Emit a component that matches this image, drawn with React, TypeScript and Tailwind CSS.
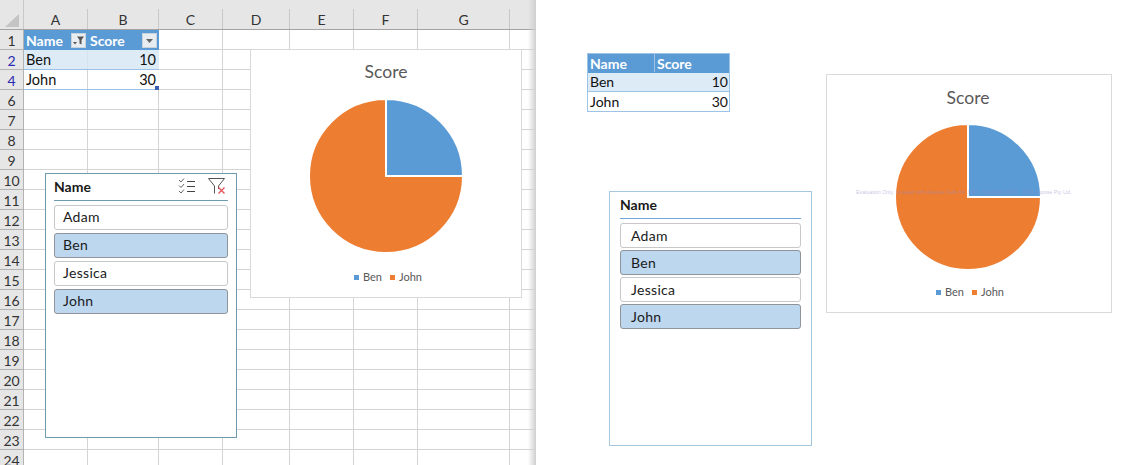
const columns = [
  { label: "A", width: "w-[64px]" },
  { label: "B", width: "w-[71px]" },
  { label: "C", width: "w-[64px]" },
  { label: "D", width: "w-[67px]" },
  { label: "E", width: "w-[64px]" },
  { label: "F", width: "w-[64px]" },
  { label: "G", width: "w-[92px]" },
];

const rowNumbers = [2, 4, 6, 7, 8, 9, 10, 11, 12, 13, 14, 15, 16, 17, 18, 19, 20, 21, 22, 23, 24];
const names = ["Adam", "Ben", "Jessica", "John"];
const selected = ["Ben", "John"];

function FilterButton({ funnel }: { funnel?: boolean }) {
  return (
    <div className="w-[15px] h-[15px] bg-[#e8edf2] border border-[#c9d3dc] flex items-center justify-center">
      <svg width="13" height="13" viewBox="0 0 13 13">
        {funnel ? (
          <>
            <path d="M5 2.500h7L9.500 6v4.500L7.500 9.500V6z" fill="#555" />
            <path d="M1 8h4L3 10.500z" fill="#555" />
          </>
        ) : (
          <path d="M3 5h7L6.500 9z" fill="#666" />
        )}
      </svg>
    </div>
  );
}

function Pie({ r, size }: { r: number; size: number }) {
  return (
    <svg width={size} height={size} viewBox={`${-size / 2} ${-size / 2} ${size} ${size}`}>
      <path d={`M0 0H${r}A${r} ${r} 0 1 1 0 ${-r}Z`} fill="#ed7d31" stroke="#fff" strokeWidth="2" />
      <path d={`M0 0V${-r}A${r} ${r} 0 0 1 ${r} 0Z`} fill="#5b9bd5" stroke="#fff" strokeWidth="2" />
    </svg>
  );
}

function Legend({ gap }: { gap: string }) {
  return (
    <div className={`flex items-center h-4 text-[11px] text-[#595959] ${gap}`}>
      <div className="flex items-center gap-[4px]">
        <div className="w-[5px] h-[5px] bg-[#5b9bd5]" />
        <span>Ben</span>
      </div>
      <div className="flex items-center gap-[4px]">
        <div className="w-[5px] h-[5px] bg-[#ed7d31]" />
        <span>John</span>
      </div>
    </div>
  );
}

function SlicerButton({ name, tight }: { name: string; tight?: boolean }) {
  const isOn = selected.includes(name);
  return (
    <div
      className={`h-[25px] rounded-[3px] flex items-center text-[14px] tracking-[0.3px] text-[#1a1a1a] ${
        tight ? "pl-[10px]" : "pl-[8px] pb-[2px]"
      } ${isOn ? "bg-[#bdd7ee] border border-[#8f9499]" : "bg-white border border-[#c8c8c8]"}`}
    >
      {name}
    </div>
  );
}

function MultiSelectIcon() {
  return (
    <svg width="18" height="16" viewBox="0 0 18 16" fill="none">
      <path d="M1 2l2 2 3-3.500M1 7.500l2 2 3-3.500M1 13l2 2 3-3.500" stroke="#666" strokeWidth="1" />
      <path d="M9 3.500h8M9 8.500h8M9 13.500h8" stroke="#444" strokeWidth="1" />
    </svg>
  );
}

function ClearFilterIcon() {
  return (
    <svg width="18" height="16" viewBox="0 0 18 16" fill="none">
      <path d="M0.500 0.500h16l-6 7.500v3M6.500 8v7.500M6.500 8l-6-7.500" stroke="#555" strokeWidth="1" />
      <path d="M10.500 9.500l6 6M16.500 9.500l-6 6" stroke="#e0555a" strokeWidth="1.400" />
    </svg>
  );
}

function RowLabel({ n, blue }: { n: number; blue?: boolean }) {
  return (
    <div
      className={`w-[24px] shrink-0 bg-[#e6e6e6] border-r border-b border-[#b3b3b3] flex items-center justify-center pt-[1px] text-[14px] ${
        blue ? "text-[#2a2ab0]" : "text-[#333333]"
      }`}
    >
      {n}
    </div>
  );
}

function PlainCells({ from }: { from: number }) {
  return (
    <>
      {columns.slice(from).map((col) => (
        <div key={col.label} className={`${col.width} shrink-0 border-r border-b border-[#d4d4d4]`} />
      ))}
      <div className="flex-1 border-b border-[#d4d4d4]" />
    </>
  );
}

function Worksheet() {
  return (
    <div className="relative w-[536px] h-[465px] overflow-hidden shrink-0 bg-white">
      {/* column headers */}
      <div className="flex h-[30px] bg-[#e6e6e6] border-b border-[#a3a3a3]">
        <div className="w-[24px] shrink-0 flex items-end justify-center pb-[2px] border-r border-[#c8c8c8]">
          <svg width="14" height="13" viewBox="0 0 14 13">
            <path d="M14 0V13H0z" fill="#c4c4c4" />
          </svg>
        </div>
        {columns.map((col) => (
          <div key={col.label} className={`${col.width} shrink-0 flex items-end h-[29px]`}>
            <div className="flex-1 h-[20px] flex items-center justify-center border-r border-[#c8c8c8] text-[14px] text-[#333333] font-['Lato',sans-serif]">
              {col.label}
            </div>
          </div>
        ))}
      </div>

      {/* row 1 with the table header */}
      <div className="flex h-[20px] font-['Lato',sans-serif]">
        <RowLabel n={1} />
        <div className="w-[135px] shrink-0 flex bg-[#5b9bd5] text-white font-bold text-[14px]">
          <div className="w-[64px] flex items-center justify-between pl-[2px] pr-[2px]">
            <span>Name</span>
            <FilterButton funnel />
          </div>
          <div className="w-[71px] flex items-center justify-between pl-[2px] pr-[2px]">
            <span>Score</span>
            <FilterButton />
          </div>
        </div>
        <PlainCells from={2} />
      </div>

      {rowNumbers.map((n) => (
        <div key={n} className="flex h-[20px] font-['Lato',sans-serif]">
          <RowLabel n={n} blue={n === 2 || n === 4} />
          {n === 2 || n === 4 ? (
            <div
              className={`w-[135px] shrink-0 flex text-[14.500px] text-[#111111] border-b border-[#9bc2e6] ${
                n === 2 ? "bg-[#ddebf7]" : "bg-white"
              }`}
            >
              <div className={`w-[64px] flex items-center pl-[2px] border-r ${n === 2 ? "border-[#d3e3f1]" : "border-[#d4d4d4]"}`}>
                {n === 2 ? "Ben" : "John"}
              </div>
              <div className="w-[71px] flex items-center justify-end pr-[3px] relative">
                {n === 2 ? "10" : "30"}
                {n === 4 && <div className="absolute right-0 bottom-[-1px] w-[4px] h-[4px] bg-[#3a5fb0]" />}
              </div>
            </div>
          ) : (
            <PlainCells from={0} />
          )}
          {(n === 2 || n === 4) && <PlainCells from={2} />}
        </div>
      ))}

      {/* chart floating on the sheet */}
      <div className="absolute left-[250px] top-[49px] w-[272px] h-[249px] bg-white border border-[#d9d9d9] flex flex-col items-center pt-[10px]">
        <div className="h-6 leading-6 text-[17.500px] text-[#595959] font-['Lato',sans-serif]">Score</div>
        <div className="mt-[14px]">
          <Pie r={77} size={156} />
        </div>
        <div className="mt-[15px] ml-[4px] font-['Lato',sans-serif]">
          <Legend gap="gap-[8px]" />
        </div>
      </div>

      {/* slicer floating on the sheet */}
      <div className="absolute left-[45px] top-[173px] w-[192px] h-[265px] bg-white border border-[#6f9bb0] px-[8px] font-['Lato',sans-serif]">
        <div className="h-[27px] flex items-center justify-between border-b border-[#6f9bb0] pr-[2px] pb-[2px]">
          <span className="font-bold text-[14px] text-[#1a1a1a]">Name</span>
          <div className="flex items-center gap-[12px]">
            <MultiSelectIcon />
            <ClearFilterIcon />
          </div>
        </div>
        <div className="mt-[4px] flex flex-col gap-[3px]">
          {names.map((name) => (
            <SlicerButton key={name} name={name} />
          ))}
        </div>
      </div>

      {/* window edge */}
      <div className="absolute right-0 top-0 bottom-0 w-[8px] bg-gradient-to-r from-transparent to-[#cfcfcf]" />
    </div>
  );
}

function Preview() {
  return (
    <div className="flex-1 h-[465px] bg-white flex font-['Lato',sans-serif] overflow-hidden">
      <div className="w-[290px] shrink-0 pl-[51px] pt-[53px]">
        {/* exported table */}
        <div className="w-[143px] border border-[#9dc3e6] text-[14px] text-[#111111]">
          <div className="flex h-[19px] pb-[1px] bg-[#5b9bd5] text-white font-bold">
            <div className="w-[67px] flex items-center pl-[2px] border-r border-[#9dc3e6]">Name</div>
            <div className="flex-1 flex items-center pl-[2px]">Score</div>
          </div>
          <div className="flex h-[19px] pb-[1px] bg-[#ddebf7] border-b border-[#9dc3e6]">
            <div className="w-[67px] flex items-center pl-[2px]">Ben</div>
            <div className="flex-1 flex items-center justify-end pr-[1px]">10</div>
          </div>
          <div className="flex h-[19px] bg-white">
            <div className="w-[67px] flex items-center pl-[2px]">John</div>
            <div className="flex-1 flex items-center justify-end pr-[1px]">30</div>
          </div>
        </div>

        {/* exported slicer */}
        <div className="ml-[22px] mt-[79px] w-[203px] h-[255px] border border-[#a5c8e0] px-[10px]">
          <div className="h-[27px] flex items-center pb-[2px] border-b border-[#6ea6dc] font-bold text-[14px] text-[#1a1a1a]">
            Name
          </div>
          <div className="mt-[4px] flex flex-col gap-[2px]">
            {names.map((name) => (
              <SlicerButton key={name} name={name} tight />
            ))}
          </div>
        </div>
      </div>

      <div className="pt-[74px]">
        {/* exported chart */}
        <div className="relative w-[286px] h-[239px] border border-[#d9d9d9] flex flex-col items-center pt-[11px]">
          <div className="h-6 leading-6 text-[17.500px] text-[#595959] mr-[2px]">Score</div>
          <div className="mt-[13px] mr-[2px]">
            <Pie r={73} size={148} />
          </div>
          <div className="mt-[13px] ml-[2px]">
            <Legend gap="gap-[8px]" />
          </div>
          <div className="absolute left-[29px] top-[113px] w-[220px] text-[5.300px] leading-[8px] whitespace-nowrap text-[#8f8acb]/50 font-['Liberation_Sans',sans-serif]">
            Evaluation Only. Created with Aspose.Cells for .NET. Copyright 2003 - 2020 Aspose Pty Ltd.
          </div>
        </div>
      </div>
    </div>
  );
}

export default function App() {
  return (
    <div className="flex w-[1126px] h-[465px] overflow-hidden bg-white">
      <Worksheet />
      <Preview />
    </div>
  );
}
